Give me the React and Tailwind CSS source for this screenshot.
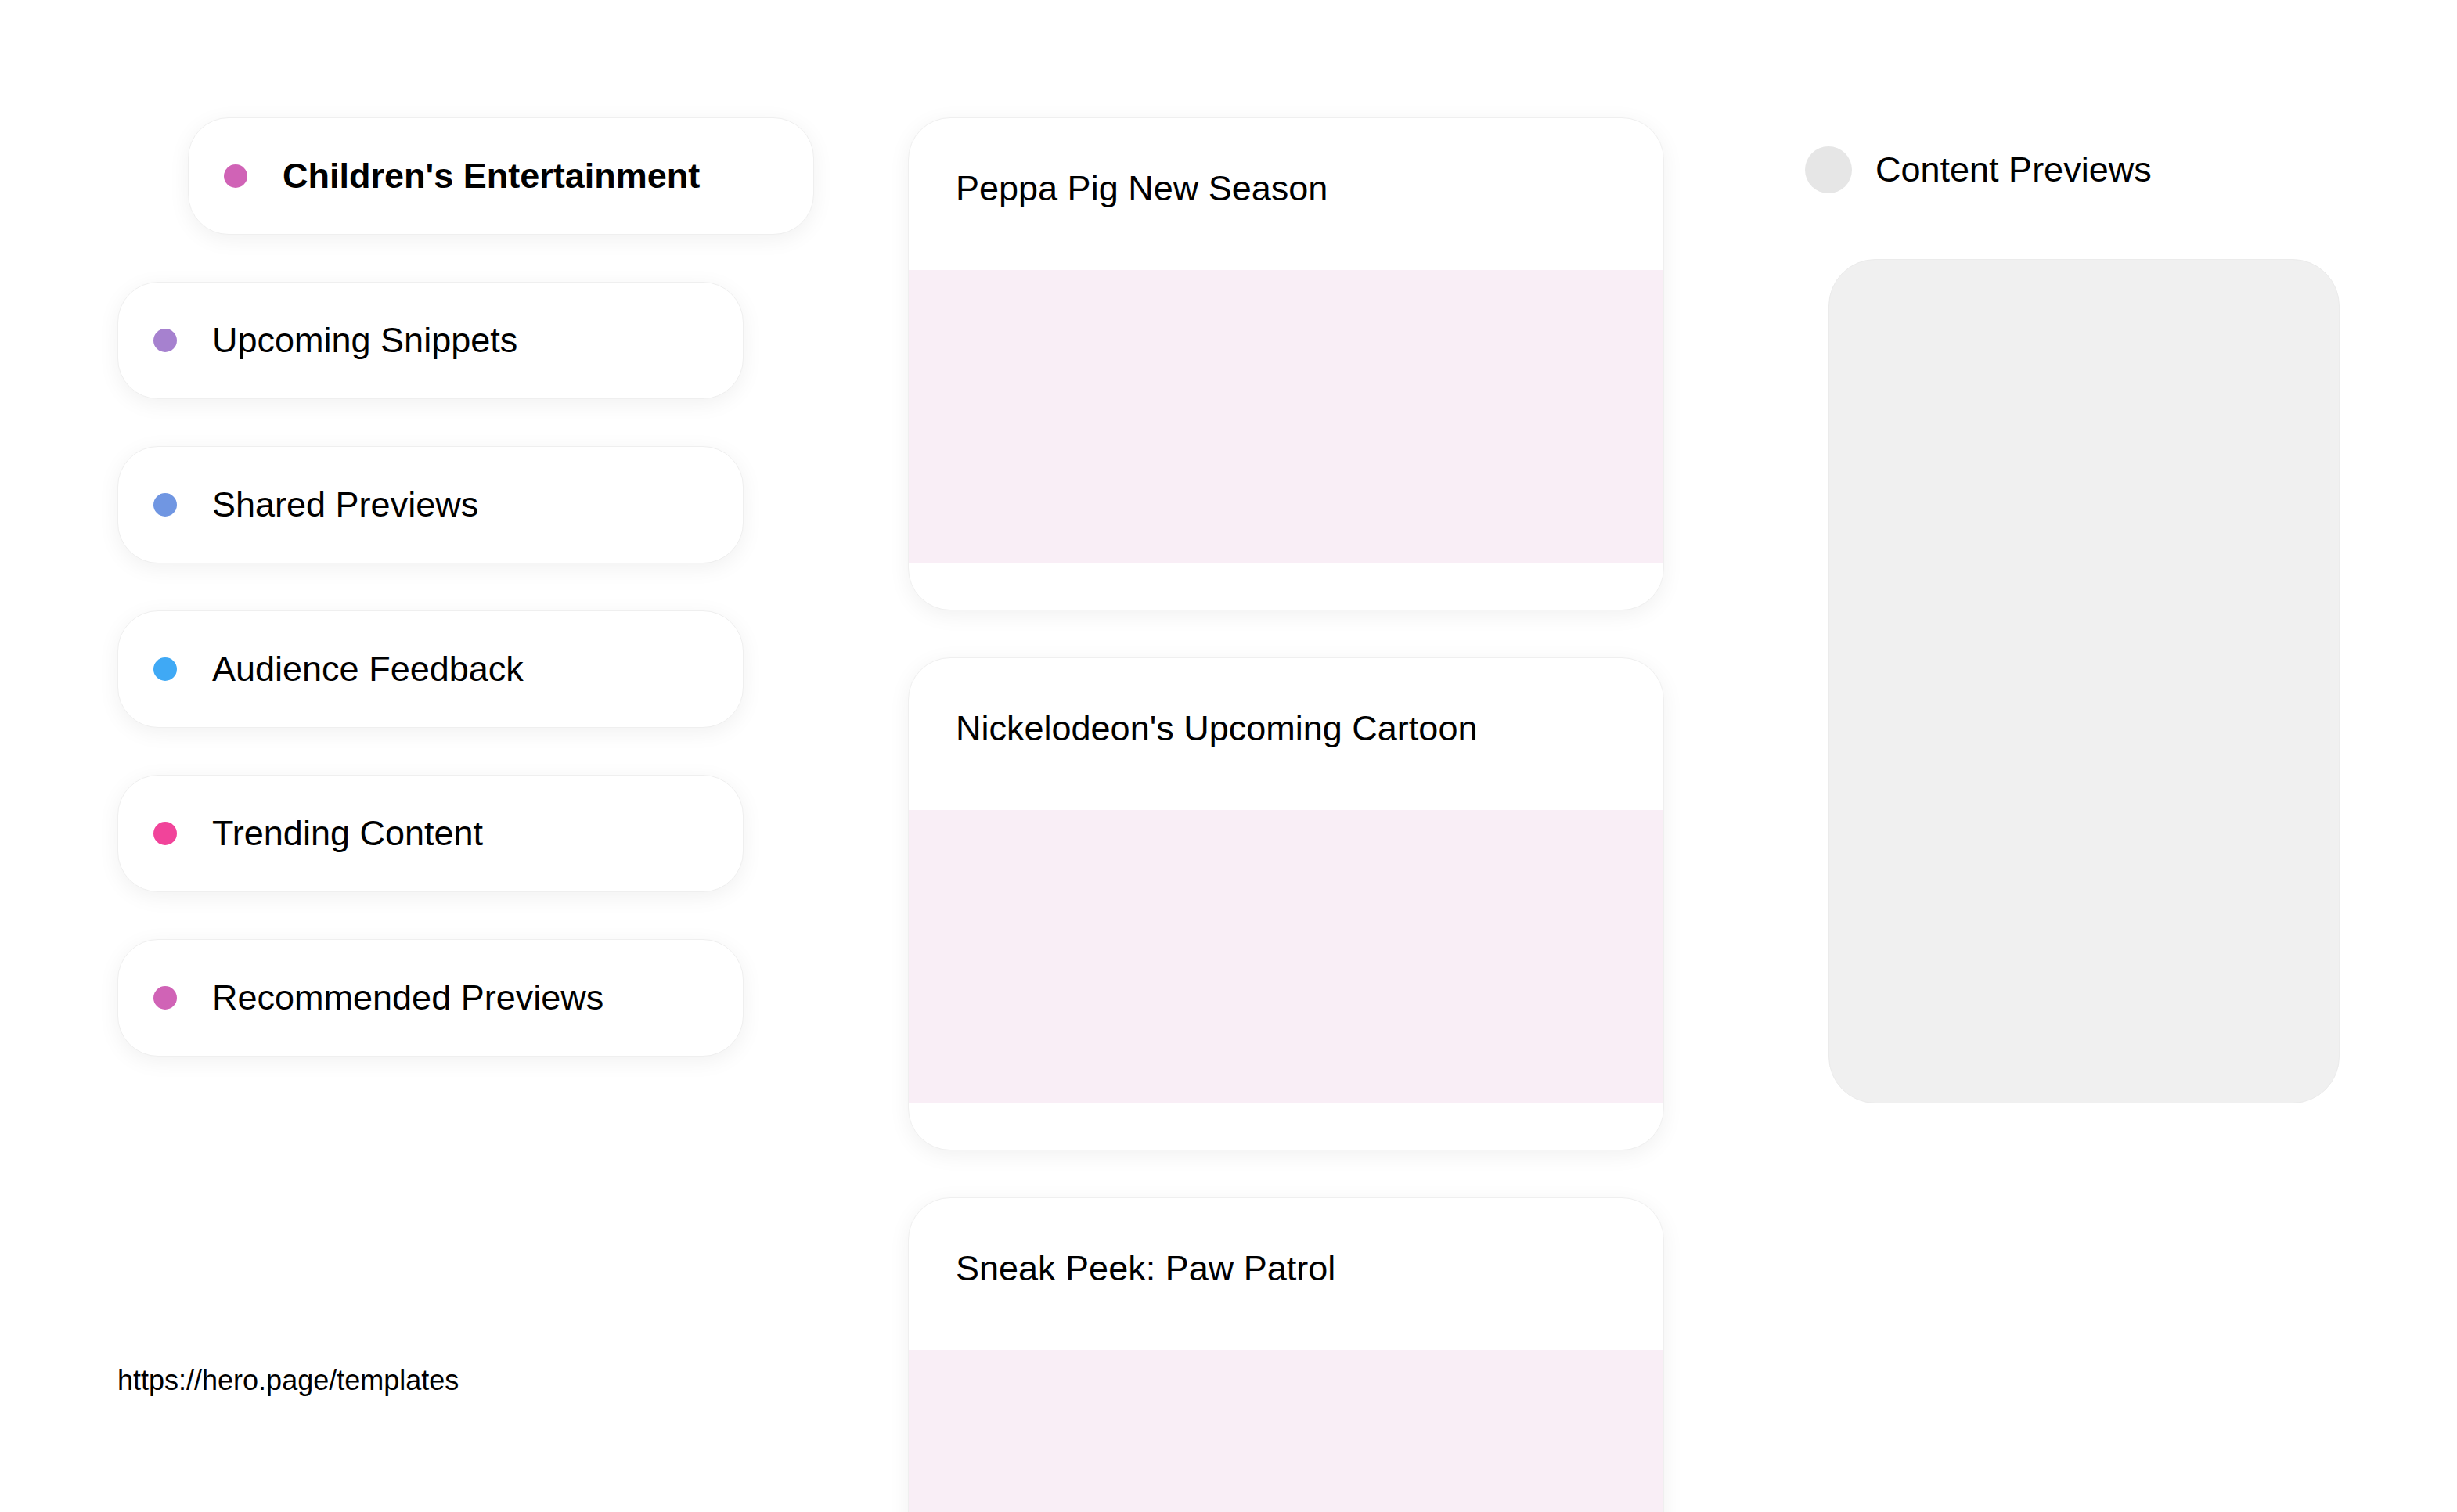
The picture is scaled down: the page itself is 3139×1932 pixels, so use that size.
import React from "react";

const navItems = [
  { label: "Children's Entertainment", color: "bg-[#d063b6]", active: true },
  { label: "Upcoming Snippets", color: "bg-[#a681cf]" },
  { label: "Shared Previews", color: "bg-[#7096e2]" },
  { label: "Audience Feedback", color: "bg-[#3fa9f5]" },
  { label: "Trending Content", color: "bg-[#f1449a]" },
  { label: "Recommended Previews", color: "bg-[#d063b6]" },
];

const cards = [
  "Peppa Pig New Season",
  "Nickelodeon's Upcoming Cartoon",
  "Sneak Peek: Paw Patrol",
];

function NavPill({ item }) {
  return (
    <div
      className={
        "flex items-center w-[800px] h-[150px] pl-[45px] gap-[45px] bg-white rounded-[52px] border border-[#efefef] shadow-[0_6px_28px_rgba(0,0,0,0.06)] " +
        (item.active ? "ml-[90px]" : "")
      }
    >
      <span className={"w-[30px] h-[30px] rounded-full shrink-0 " + item.color} />
      <span
        className={
          "text-[45px] text-black " + (item.active ? "font-bold" : "font-normal")
        }
      >
        {item.label}
      </span>
    </div>
  );
}

function PreviewCard({ title }) {
  return (
    <div className="w-[966px] h-[630px] shrink-0 bg-white rounded-[54px] border border-[#efefef] shadow-[0_6px_28px_rgba(0,0,0,0.06)] overflow-hidden flex flex-col">
      <div className="px-[60px] pt-[59px] pb-[74px] text-[45px] leading-[61px] text-black">
        {title}
      </div>
      <div className="h-[375px] bg-[#f9eef6]" />
      <div className="h-[60px]" />
    </div>
  );
}

export default function App() {
  return (
    <div className="flex min-h-screen bg-white pt-[150px] pl-[150px] pb-[150px] font-['Liberation_Sans',Arial,sans-serif]">
      <div className="w-[1010px] h-[1632px] shrink-0 flex flex-col">
        <div className="flex flex-col gap-[60px]">
          {navItems.map((item) => (
            <NavPill key={item.label} item={item} />
          ))}
        </div>
        <div className="mt-auto text-[36px] leading-[36px] text-black">
          https://hero.page/templates
        </div>
      </div>

      <div className="flex flex-col gap-[60px] shrink-0">
        {cards.map((title) => (
          <PreviewCard key={title} title={title} />
        ))}
      </div>

      <div className="ml-[180px] w-[683px] shrink-0 pt-[33px]">
        <div className="flex items-center gap-[30px]">
          <span className="w-[60px] h-[60px] rounded-full bg-[#e6e6e6]" />
          <span className="text-[45px] text-black">Content Previews</span>
        </div>
        <div className="ml-[30px] mt-[80px] w-[653px] h-[1079px] bg-[#f0f0f0] rounded-[60px] border border-[#ebebeb]" />
      </div>
    </div>
  );
}
